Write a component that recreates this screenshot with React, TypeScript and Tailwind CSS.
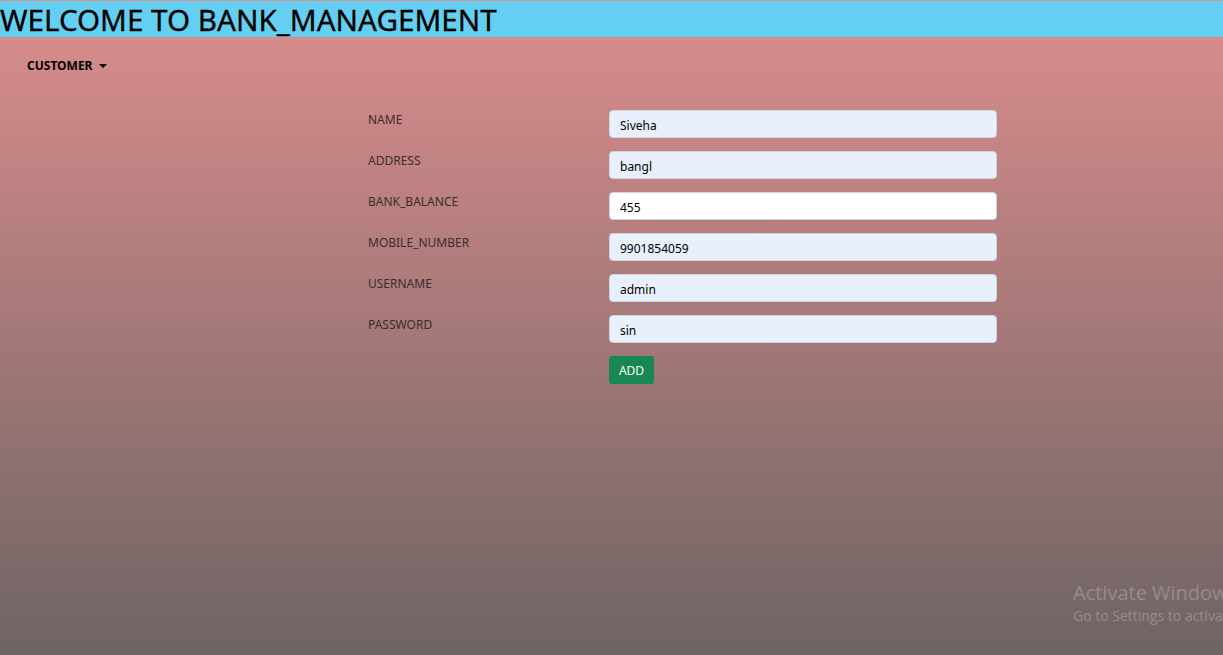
import { useState } from 'react';

const font = { fontFamily: '"Noto Sans", "Open Sans", "Liberation Sans", sans-serif' };

interface Field {
  label: string;
  value: string;
  filled: boolean;
}

const fields: Field[] = [
  { label: 'NAME', value: 'Siveha', filled: true },
  { label: 'ADDRESS', value: 'bangl', filled: true },
  { label: 'BANK_BALANCE', value: '455', filled: false },
  { label: 'MOBILE_NUMBER', value: '9901854059', filled: true },
  { label: 'USERNAME', value: 'admin', filled: true },
  { label: 'PASSWORD', value: 'sin', filled: true },
];

export default function App() {
  const [values, setValues] = useState(fields.map((f) => f.value));

  return (
    <div
      className="relative min-h-[655px] w-full overflow-hidden bg-gradient-to-b from-[#dd8d8d] to-[#6e6464] pt-px text-[#212529]"
      style={font}
    >
      {/* Header */}
      <div className="h-[36px] bg-[#64cff0]">
        <h1 className="text-[29.6px] leading-[37px] font-normal text-black [-webkit-text-stroke:0.3px_black]">
          WELCOME TO BANK_MANAGEMENT
        </h1>
      </div>

      {/* Nav */}
      <div className="flex h-[57px] items-center pl-[27px]">
        <button className="flex items-center gap-[7px] text-[12px] font-bold text-black">
          CUSTOMER
          <span className="mt-[1px] h-0 w-0 border-x-[4px] border-t-[4px] border-x-transparent border-t-black" />
        </button>
      </div>

      {/* Form */}
      <form className="ml-[368px] mt-[16px] w-[629px]" onSubmit={(e) => e.preventDefault()}>
        <div className="flex flex-col gap-[13px]">
          {fields.map((f, i) => (
            <div key={f.label} className="flex">
              <label className="w-[241px] pt-[2px] text-[12px] leading-[16px] text-[#3a2d2d]">{f.label}</label>
              <input
                value={values[i]}
                onChange={(e) => {
                  const next = [...values];
                  next[i] = e.target.value;
                  setValues(next);
                }}
                className={`h-[28px] w-[388px] rounded-[4px] border border-[#ced4da] px-[10px] pt-[2px] text-[12px] text-black outline-none ${
                  f.filled ? 'bg-[#e8f0fe]' : 'bg-white'
                }`}
              />
            </div>
          ))}
          <div className="flex">
            <div className="w-[241px]" />
            <button
              type="submit"
              className="h-[28px] w-[45px] rounded-[3px] bg-[#198754] pt-[2px] text-[12px] text-white"
            >
              ADD
            </button>
          </div>
        </div>
      </form>

      {/* Windows activation watermark */}
      <div
        className="pointer-events-none absolute left-[1073px] top-[580px] whitespace-nowrap text-[#968a8a]"
        style={{ fontFamily: '"Open Sans", "Noto Sans", sans-serif' }}
      >
        <div className="text-[20px] leading-[25px]">Activate Windows</div>
        <div className="text-[14px] leading-[21px]">Go to Settings to activate Windows.</div>
      </div>
    </div>
  );
}
